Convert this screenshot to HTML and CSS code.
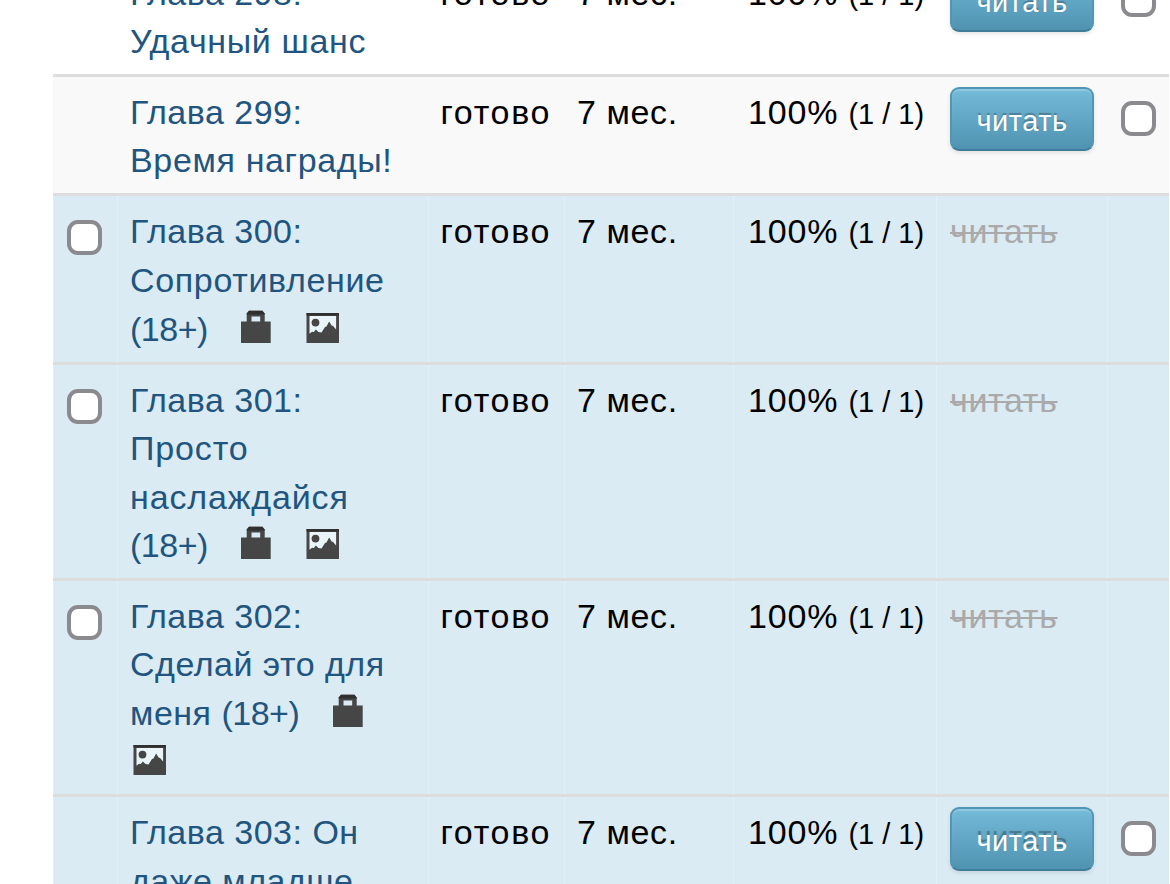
FILE: index.html
```html
<!DOCTYPE html>
<html lang="ru">
<head>
    <meta charset="UTF-8">
    <meta name="viewport" content="width=device-width, initial-scale=1.0">
    <title>Главы</title>
    <link rel="stylesheet" href="styles.css">
</head>
<body>
    <!-- shared icons -->
    <svg class="sprite" width="0" height="0">
        <symbol id="icon-lock" viewBox="0 0 34 34">
            <path fill="#464646" fill-rule="evenodd" d="M2 12.500h5.700V4.500L10 1.800h13.400L25.700 4.500v8h6V34H2zM12.500 7.500v5h8.700v-5z"/>
            <path fill="#303030" d="M7.700 4.500L10 1.800h13.400l2.300 2.700v1h-18z"/>
        </symbol>
        <symbol id="icon-picture" viewBox="0 0 34 34">
            <path fill="#eaf5fa" d="M3 5h29v27H3z"/>
            <path fill="#464646" fill-rule="evenodd" d="M1.500 4H34v30H1.500zM4.500 7v17.700l2.500-2 1.800.3 2-2.500 2.700 2.500 3 .5 3.500-5.500 1.500-.5 2.600-5 2.500 4 1.500.5 3 3.500V7z"/>
            <path fill="#303030" d="M1.500 4H34v2.500H1.500z"/>
            <circle cx="10.500" cy="13.600" r="3.900" fill="#464646"/>
        </symbol>
    </svg>

    <table class="chapters">
        <colgroup>
            <col class="col-check">
            <col class="col-title">
            <col class="col-status">
            <col class="col-date">
            <col class="col-progress">
            <col class="col-read">
            <col class="col-select">
        </colgroup>
        <tbody>
            <tr class="lines-2">
                <td></td>
                <td class="title"><a class="name">Глава 298:</a><br><a class="wide">Удачный шанс</a></td>
                <td class="status">готово</td>
                <td class="date">7 мес.</td>
                <td class="progress">100% <small>(1 / 1)</small></td>
                <td class="read"><a class="btn">читать</a></td>
                <td><span class="checkbox"></span></td>
            </tr>
            <tr class="lines-2 odd">
                <td></td>
                <td class="title"><a class="name">Глава 299:</a><br><a class="wide">Время награды!</a></td>
                <td class="status">готово</td>
                <td class="date">7 мес.</td>
                <td class="progress">100% <small>(1 / 1)</small></td>
                <td class="read"><a class="btn">читать</a></td>
                <td><span class="checkbox"></span></td>
            </tr>
            <tr class="lines-3 paid">
                <td><span class="checkbox"></span></td>
                <td class="title"><a class="name">Глава 300:</a><br><a class="wide">Сопротивление</a><br><a class="age">(18+)</a> <svg class="icon lock"><use href="#icon-lock"/></svg> <svg class="icon"><use href="#icon-picture"/></svg></td>
                <td class="status">готово</td>
                <td class="date">7 мес.</td>
                <td class="progress">100% <small>(1 / 1)</small></td>
                <td class="read"><span class="closed">читать</span></td>
                <td></td>
            </tr>
            <tr class="lines-4 paid">
                <td><span class="checkbox"></span></td>
                <td class="title"><a class="name">Глава 301:</a><br><a class="wider">Просто</a><br><a class="wider">наслаждайся</a><br><a class="age">(18+)</a> <svg class="icon lock"><use href="#icon-lock"/></svg> <svg class="icon"><use href="#icon-picture"/></svg></td>
                <td class="status">готово</td>
                <td class="date">7 мес.</td>
                <td class="progress">100% <small>(1 / 1)</small></td>
                <td class="read"><span class="closed">читать</span></td>
                <td></td>
            </tr>
            <tr class="lines-4 paid">
                <td><span class="checkbox"></span></td>
                <td class="title"><a class="name">Глава 302:</a><br><a class="name">Сделай это для</a><br><a class="name">меня </a><a class="age">(18+)</a> <svg class="icon lock"><use href="#icon-lock"/></svg><br><svg class="icon"><use href="#icon-picture"/></svg></td>
                <td class="status">готово</td>
                <td class="date">7 мес.</td>
                <td class="progress">100% <small>(1 / 1)</small></td>
                <td class="read"><span class="closed">читать</span></td>
                <td></td>
            </tr>
            <tr class="lines-3 paid">
                <td></td>
                <td class="title"><a class="name">Глава 303: Он</a><br><a class="name">даже младше</a></td>
                <td class="status">готово</td>
                <td class="date">7 мес.</td>
                <td class="progress">100% <small>(1 / 1)</small></td>
                <td class="read"><a class="btn btn-paid">читать</a></td>
                <td><span class="checkbox"></span></td>
            </tr>
        </tbody>
    </table>
</body>
</html>
```

FILE: styles.css
```css
html {
    overflow: hidden;
}
body {
    margin: 0;
    height: 884px;
    overflow: hidden;
    background-color: #fff;
    color: #000;
    font-family: "Liberation Sans", Arial, sans-serif;
    font-size: 34px;
    line-height: 48.3px;
}
.sprite {
    display: block;
}
/* the list is scrolled, its first row is cut by the top edge */
.chapters {
    width: 1116px;
    margin: -45px 0 0 53px;
    table-layout: fixed;
    border-collapse: separate;
    border-spacing: 0;
}
.col-check { width: 64px; }
.col-title { width: 311px; }
.col-status { width: 136px; }
.col-date { width: 169px; }
.col-progress { width: 203px; }
.col-read { width: 171px; }
.col-select { width: 62px; }

td {
    box-sizing: border-box;
    padding: 11px 0 0 14px;
    border-top: 3px solid #ddd;
    vertical-align: top;
    white-space: nowrap;
}
.lines-2 td { height: 119px; }
.lines-3 td { height: 169px; }
.lines-4 td { height: 216px; }
.lines-3 .title { line-height: 48.8px; }

.odd td {
    background-color: #f9f9f9;
}
.paid td {
    background-color: #dbebf4;
    box-shadow: inset 1px 0 #e2f0f7;
}
td.title {
    padding-left: 13px;
}
.title a {
    color: #215580;
}
.name { letter-spacing: 0.5px; }
.wide { letter-spacing: 0.65px; }
.wider { letter-spacing: 0.85px; }
.age { letter-spacing: -0.5px; }
td.status {
    padding-left: 12.5px;
    letter-spacing: 1.7px;
}
td.date {
    padding-left: 13px;
    letter-spacing: 0.6px;
}
td.progress {
    padding-left: 15px;
    letter-spacing: 0.8px;
}
small {
    font-size: 29px;
    letter-spacing: 0;
}
.icon {
    width: 34px;
    height: 34px;
    margin: 0 0 0 1.5px;
    vertical-align: -2px;
}
.icon.lock {
    margin: 0 20.5px 0 22px;
}
.closed {
    color: #aaa;
    letter-spacing: 0.7px;
    text-decoration: line-through;
    text-decoration-thickness: 2px;
}
.checkbox {
    display: block;
    box-sizing: border-box;
    width: 35px;
    height: 35px;
    margin-top: 12.5px;
    border: 4px solid #8b8a8f;
    border-radius: 11px;
    background-color: #fff;
}
.btn {
    display: block;
    box-sizing: border-box;
    width: 144px;
    height: 64px;
    margin-top: -1px;
    border: 2px solid #4f97b5;
    border-bottom-color: #3f7d98;
    border-radius: 9px;
    background: linear-gradient(#74bbd9, #4f93b1);
    box-shadow: inset 0 2px 1px rgba(255, 255, 255, 0.2), 0 2px 4px rgba(0, 0, 0, 0.1);
    color: #fff;
    font-size: 29px;
    letter-spacing: 0.5px;
    line-height: 64px;
    text-align: center;
    text-shadow: 0 -2px 1px rgba(0, 0, 0, 0.25);
}
.btn-paid {
    text-shadow: 0 -4px 1px rgba(0, 0, 0, 0.3);
}
```
